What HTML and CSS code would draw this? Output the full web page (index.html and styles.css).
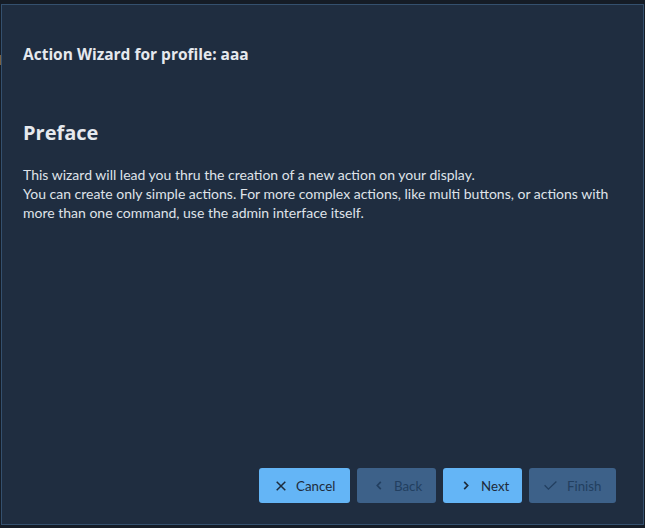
FILE: index.html
```html
<!DOCTYPE html>
<html>
<head>
<meta charset="utf-8">
<link rel="stylesheet" href="styles.css">
</head>
<body>
<div class="backdrop-mark"></div>
<div class="dialog">
  <div class="header">Action Wizard for profile: aaa</div>
  <div class="content">
    <h2 class="step-title">Preface</h2>
    <p class="step-text">This wizard will lead you thru the creation of a new action on your display.<br>You can create only simple actions. For more complex actions, like multi buttons, or actions with more than one command, use the admin interface itself.</p>
  </div>
  <div class="footer">
    <button class="btn primary btn-cancel"><svg class="ic" width="10" height="10" viewBox="0 0 10 10"><path d="M0.7 0.7 L9.3 9.3 M9.3 0.7 L0.7 9.3" stroke="currentColor" stroke-width="1.5" fill="none"/></svg><span>Cancel</span></button>
    <button class="btn disabled btn-back"><svg class="ic" width="6" height="9" viewBox="0 0 6 9"><path d="M4.8 0.8 L1.3 4.5 L4.8 8.2" stroke="currentColor" stroke-width="1.7" fill="none"/></svg><span>Back</span></button>
    <button class="btn primary btn-next"><svg class="ic" width="6" height="9" viewBox="0 0 6 9"><path d="M1.2 0.8 L4.7 4.5 L1.2 8.2" stroke="currentColor" stroke-width="1.7" fill="none"/></svg><span>Next</span></button>
    <button class="btn disabled btn-finish"><svg class="ic" width="13" height="9" viewBox="0 0 13 9"><path d="M0.6 4.3 L4.4 8.1 L12.4 0.5" stroke="currentColor" stroke-width="1.3" fill="none"/></svg><span>Finish</span></button>
  </div>
</div>
</body>
</html>
```
FILE: styles.css
```css
html, body {
  margin: 0;
  padding: 0;
  background: #151c26;
  width: 645px;
  height: 528px;
  overflow: hidden;
  font-family: "Open Sans", "Noto Sans", sans-serif;
}
body {
  position: relative;
  padding: 4px 1px 3px 1px;
  box-sizing: border-box;
}
.backdrop-mark {
  position: absolute;
  left: 0;
  top: 55px;
  width: 1px;
  height: 10px;
  background: #7a6040;
}
.dialog {
  height: 521px;
  box-sizing: border-box;
  background: #1f2d40;
  border: 1px solid #34506e;
  display: flex;
  flex-direction: column;
  color: #e6e9ee;
}
.header {
  padding: 38px 21px 0 21px;
  font-size: 15.5px;
  font-weight: 700;
  line-height: 22px;
}
.content {
  flex: 1;
  padding: 0 21px;
}
.step-title {
  margin: 54px 0 0 0;
  font-size: 20px;
  font-weight: 700;
  line-height: 28px;
}
.step-text {
  margin: 18px 0 0 0;
  font-family: Lato, "Open Sans", sans-serif;
  font-size: 14px;
  line-height: 19px;
  color: #dfe3e9;
}
.footer {
  display: flex;
  justify-content: flex-end;
  gap: 7px;
  padding: 0 27px 21px 0;
}
.btn {
  height: 35px;
  border: none;
  border-radius: 3px;
  display: flex;
  align-items: center;
  box-sizing: border-box;
  font-family: Lato, "Open Sans", sans-serif;
  font-size: 13.3px;
  line-height: 1;
  padding: 0 0 0 17px;
}
.btn span {
  position: relative;
  top: 1px;
}
.btn.primary {
  background: #64b5f6;
  color: #1e2b3b;
}
.btn.disabled {
  background: #3d6189;
  color: #223f60;
}
.btn-cancel { width: 91px; gap: 10px; }
.btn-back { width: 79px; gap: 12px; padding-left: 19px; }
.btn-next { width: 79px; gap: 12px; padding-left: 20px; }
.btn-finish { width: 87px; gap: 10px; padding-left: 15px; }
```
